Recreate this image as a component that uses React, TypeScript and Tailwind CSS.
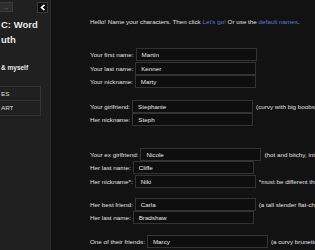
import React from 'react';

type Row = { label: string; value: string; note?: string };

const groups: { mt: string; rows: Row[] }[] = [
  {
    mt: 'mt-[22px]',
    rows: [
      { label: 'Your first name:', value: 'Martin' },
      { label: 'Your last name:', value: 'Kenner' },
      { label: 'Your nickname:', value: 'Marty' },
    ],
  },
  {
    mt: 'mt-[11px]',
    rows: [
      { label: 'Your girlfriend:', value: 'Stephanie', note: '(curvy with big boobs)' },
      { label: 'Her nickname:', value: 'Steph' },
    ],
  },
  {
    mt: 'mt-[21px]',
    rows: [
      { label: 'Your ex girlfriend:', value: 'Nicole', note: '(hot and bitchy, into you)' },
      { label: 'Her last name:', value: 'Cliffe' },
      { label: 'Her nickname*:', value: 'Niki', note: '*must be different than first name' },
    ],
  },
  {
    mt: 'mt-[9.5px]',
    rows: [
      { label: 'Her best friend:', value: 'Carla', note: '(a tall slender flat-chested blonde)' },
      { label: 'Her last name:', value: 'Bradshaw' },
    ],
  },
  {
    mt: 'mt-[10.5px]',
    rows: [{ label: 'One of their friends:', value: 'Marcy', note: '(a curvy brunette)' }],
  },
];

function Field({ label, value, note }: Row) {
  return (
    <div className="flex items-center h-[13.5px]">
      <span>{label}</span>
      <div className="ml-[2px] w-[121px] h-[13px] shrink-0 flex items-center pl-[5px] bg-[#0e0e0e] border border-[#333] text-[#e6e6e6]">
        {value}
      </div>
      {note && <span className="ml-[3px]">{note}</span>}
    </div>
  );
}

export default function App() {
  return (
    <div className="w-[315px] h-[250px] flex overflow-hidden bg-[#121212] font-['Liberation_Sans',Arial,sans-serif]">
      {/* sidebar, mostly collapsed */}
      <aside className="w-[51px] shrink-0 bg-[#202020] border-r border-[#2a2a2a] overflow-hidden text-[#e8e8e8]">
        <div className="flex justify-between items-start pt-[2px] pr-[2px]">
          <div className="w-[13px] h-[10px] bg-[#2e2e2e] border border-[#3a3a3a] border-l-0 flex items-center justify-center text-[7px] leading-none text-[#6a6a6a]">
            →
          </div>
          <div className="w-[11px] h-[11px] bg-[#0c0c0c] border border-[#3a3a3a] flex items-center justify-center">
            <svg width="6" height="7" viewBox="0 0 6 7">
              <path d="M4.5 0.8 L1.5 3.5 L4.5 6.2" stroke="#fff" strokeWidth="1.6" fill="none" />
            </svg>
          </div>
        </div>
        <div className="mt-[4px] pl-[1px] text-[9.5px] font-bold leading-[15px] whitespace-nowrap">
          <div>C: Word</div>
          <div>uth</div>
        </div>
        <div className="mt-[16px] pl-[1px] text-[6.5px] font-bold whitespace-nowrap">&amp; myself</div>
        <div className="mt-[13px] w-[41px] border border-l-0 border-[#333] text-[6.25px] text-[#ddd]">
          <div className="h-[14px] flex items-center pl-[1px] border-b border-[#333]">ES</div>
          <div className="h-[14px] flex items-center pl-[1px]">ART</div>
        </div>
      </aside>

      <main className="flex-1 pl-[39px] pt-[18px] text-[6.25px] text-[#e0e0e0] whitespace-nowrap">
        <div className="h-[8px] leading-[8px]">
          Hello! Name your characters. Then click <span className="text-[#5b7bd5]">Let's go!</span> Or use
          the <span className="text-[#5b7bd5]">default names</span>.
        </div>
        {groups.map((g, i) => (
          <div key={i} className={g.mt}>
            {g.rows.map((r) => (
              <Field key={r.label + r.value} {...r} />
            ))}
          </div>
        ))}
      </main>
    </div>
  );
}
